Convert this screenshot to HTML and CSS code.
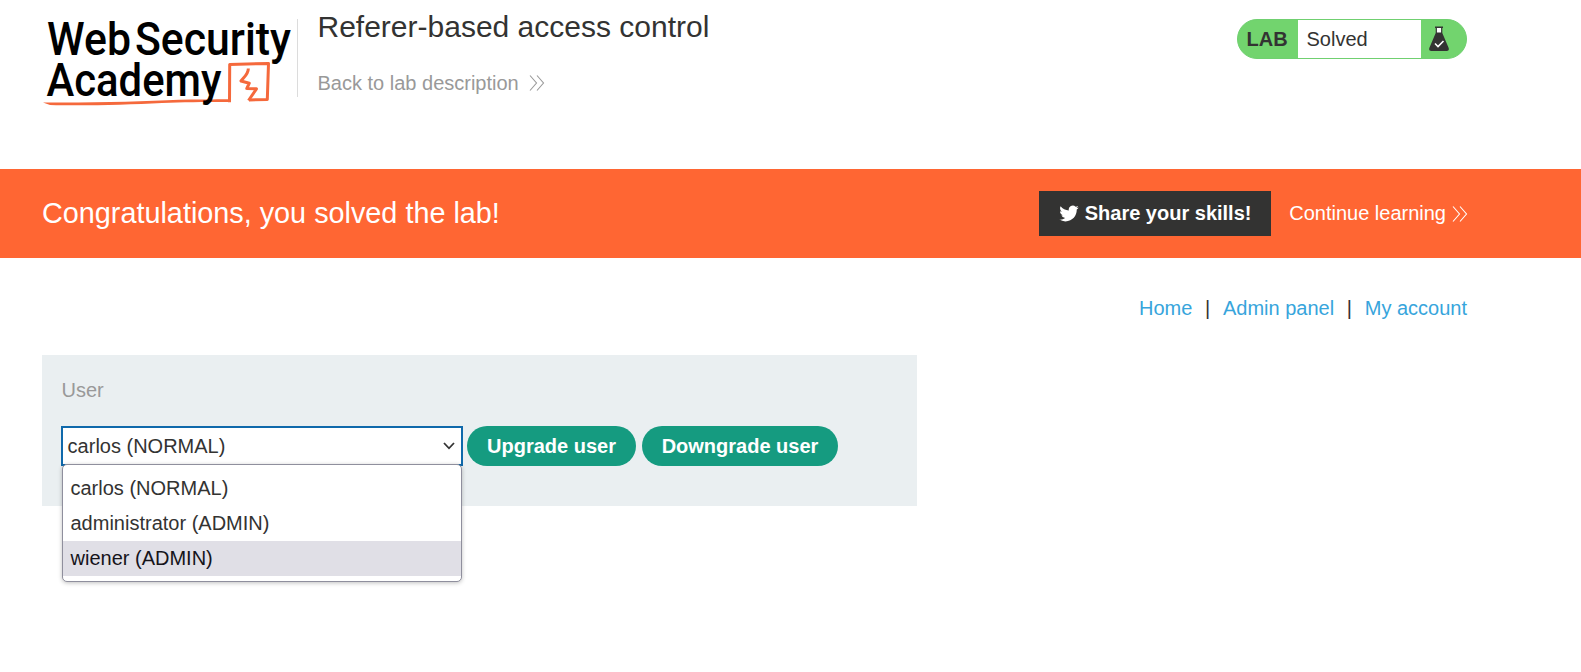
FILE: index.html
```html
<!DOCTYPE html>
<html lang="en">
<head>
<meta charset="utf-8">
<title>Referer-based access control</title>
<link rel="stylesheet" href="styles.css">
</head>
<body>
<header class="header">
  <svg class="logo" width="256" height="98" viewBox="0 0 256 98" role="img" aria-label="Web Security Academy">
    <g class="logo-mark">
      <path class="logo-taper" d="M1 91.500C50 91.500 90 91 125 89.200C150 88 172 88.600 188 88.300V91C160 91 140 91 120 92C85 93.800 40 95 8 94Z"/>
      <path class="logo-line" d="M187.500 91.200L187.700 53.500L226.500 52.500L225.300 88.500L207 89"/>
      <path class="logo-bolt" d="M206.300 57.500C206.500 63 202 66 199 70L207.300 72.200L204.800 77.500L214.500 77.800L206.500 89.500"/>
    </g>
    <g class="logo-text">
      <text x="5" y="43.700" textLength="84" lengthAdjust="spacingAndGlyphs">Web</text>
      <text x="93" y="43.700" textLength="156" lengthAdjust="spacingAndGlyphs">Security</text>
      <text x="4.500" y="84.800" textLength="175" lengthAdjust="spacingAndGlyphs">Academy</text>
    </g>
  </svg>
  <div class="title-block">
    <h1 class="title">Referer-based access control</h1>
    <a class="back-link">Back to lab description
      <svg class="chevrons" width="16" height="18" viewBox="0 0 16 18"><path d="M1 1.500L7.500 9L1 16.500M8 1.500L14.500 9L8 16.500"/></svg>
    </a>
  </div>
  <div class="lab-status">
    <span class="lab-tag">LAB</span>
    <span class="lab-state">Solved</span>
    <span class="lab-icon">
      <svg width="22" height="26" viewBox="0 0 22 26">
        <path class="flask-neck" d="M8.300 1.500H13.700V8H8.300Z"/>
        <path class="flask-body" d="M7 .5H15V2H14.300V7L20.700 22Q21.500 25 18.500 25H3.500Q.5 25 1.300 22L7.700 7V2H7ZM8.900 2V6.500H13.100V2Z" fill-rule="evenodd"/>
        <path class="flask-check" d="M7 17.500L10 20.500L15.500 15"/>
      </svg>
    </span>
  </div>
</header>
<section class="banner">
  <p class="banner-text">Congratulations, you solved the lab!</p>
  <a class="share">
    <svg class="bird" width="20" height="17" viewBox="0 1.500 24 21"><path d="M23.950 4.570a10 10 0 0 1-2.820.77 4.960 4.960 0 0 0 2.160-2.720c-.95.55-2 .95-3.130 1.180a4.920 4.920 0 0 0-8.380 4.480C7.690 8.090 4.070 6.130 1.640 3.160a4.820 4.820 0 0 0-.67 2.480c0 1.710.87 3.210 2.190 4.100a4.900 4.900 0 0 1-2.230-.62v.06a4.920 4.920 0 0 0 3.950 4.830 5 5 0 0 1-2.210.08 4.940 4.940 0 0 0 4.600 3.420A9.870 9.870 0 0 1 0 19.540a14 14 0 0 0 7.550 2.210c9.050 0 14-7.500 14-13.980 0-.21 0-.42-.02-.63a9.940 9.940 0 0 0 2.420-2.570z"/></svg>
    <span class="share-text">Share your skills!</span>
  </a>
  <a class="continue"><span class="share-text">Continue learning</span>
    <svg class="chevrons" width="16" height="18" viewBox="0 0 16 18"><path d="M1 1.500L7.500 9L1 16.500M8 1.500L14.500 9L8 16.500"/></svg>
  </a>
</section>
<main class="content">
  <nav class="nav">
    <a class="nav-link">Home</a><span>|</span><a class="nav-link">Admin panel</a><span>|</span><a class="nav-link">My account</a>
  </nav>
  <form class="panel">
    <label class="label">User</label>
    <div class="controls">
      <div class="select">
        <span>carlos (NORMAL)</span>
        <svg class="caret" width="12" height="8" viewBox="0 0 12 8"><path d="M1 1L6 6.300L11 1"/></svg>
        <div class="menu">
          <div class="option">carlos (NORMAL)</div>
          <div class="option">administrator (ADMIN)</div>
          <div class="option option-active">wiener (ADMIN)</div>
        </div>
      </div>
      <button class="button upgrade" type="button">Upgrade user</button>
      <button class="button downgrade" type="button">Downgrade user</button>
    </div>
  </form>
</main>
</body>
</html>
```
FILE: styles.css
```css
* { box-sizing: border-box; }
body {
  min-height: 672px;
  margin: 0;
  background: #fff;
  color: #333332;
  font: 20px/24px "Liberation Sans", Arial, sans-serif;
}
svg { display: block; flex: none; }
.header {
  display: flex;
  align-items: flex-start;
  height: 169px;
  padding: 0 114px 0 42px;
}
.logo { margin-top: 11px; overflow: visible; }
.logo-text {
  fill: #000;
  font: 500 47px Roboto, sans-serif;
}
.logo-taper { fill: #f5693c; }
.logo-line, .logo-bolt {
  fill: none;
  stroke: #f5693c;
  stroke-width: 3;
  stroke-linejoin: round;
}
.title-block {
  height: 78px;
  margin: 19px 0 0 -1px;
  padding-left: 19.500px;
  border-left: 1px solid #dcdcdc;
}
.title {
  margin: -9px 0 0;
  font-size: 30px;
  font-weight: 400;
  line-height: 34px;
}
.back-link {
  display: flex;
  align-items: center;
  gap: 10.500px;
  margin-top: 27px;
  color: #999;
}
.chevrons path {
  fill: none;
  stroke: currentColor;
  stroke-width: 1.1;
}
.lab-status {
  display: flex;
  width: 230px;
  height: 40px;
  margin: 19px 0 0 auto;
  border: 1px solid #70d070;
  border-radius: 20px;
  overflow: hidden;
  background: #72d46e;
  line-height: 38px;
}
.lab-tag { width: 60px; padding-left: 8.500px; font-weight: 700; }
.lab-state { width: 123px; padding-left: 8.500px; background: #fff; }
.lab-icon { padding: 6px 0 0 7px; }
.flask-neck { fill: #fff; }
.flask-body { fill: #333332; }
.flask-check { fill: none; stroke: #fff; stroke-width: 1.6; }
.banner {
  display: flex;
  align-items: center;
  height: 89px;
  padding: 0 113px 0 42px;
  background: #ff6633;
  color: #fff;
}
.banner-text { margin: 0 auto 0 0; padding-bottom: 2px; font-size: 28.800px; line-height: 34px; }
.share {
  display: flex;
  align-items: center;
  gap: 6px;
  width: 232px;
  height: 45px;
  padding-left: 19.500px;
  background: #333332;
  font-weight: 700;
  white-space: nowrap;
}
.share-text { padding-bottom: 2px; }
.bird { fill: #fff; }
.continue {
  display: flex;
  align-items: center;
  gap: 6px;
  margin-left: 18px;
}
.content { padding: 38px 114px 0 42px; }
.nav { display: flex; justify-content: flex-end; gap: 12.700px; }
.nav-link { color: #37a5dc; }
.panel {
  width: 875px;
  height: 151px;
  margin-top: 35px;
  padding: 23px 19px;
  background: #eaeff1;
}
.label { display: block; margin-left: .5px; color: #999; }
.controls { display: flex; margin-top: 24px; }
.select {
  position: relative;
  display: flex;
  align-items: center;
  justify-content: space-between;
  width: 402px;
  height: 40px;
  padding: 0 6px 0 4.600px;
  border: 2px solid #0f69ab;
  background: #fff;
}
.caret { fill: none; stroke: #333; stroke-width: 1.8; }
.menu {
  position: absolute;
  top: 36px;
  left: -1px;
  width: 400px;
  height: 118px;
  padding-top: 6px;
  border: 1px solid #8f8f9d;
  border-radius: 5px;
  background: #fff;
  box-shadow: 0 1px 4px rgba(0, 0, 0, .25);
}
.option { height: 35px; padding-left: 7.500px; line-height: 35px; }
.option-active { background: #e0dfe6; color: #15141a; }
.button {
  height: 40px;
  padding: 0;
  border: 0;
  border-radius: 20px;
  background: #159b80;
  color: #fff;
  font: 700 20px/40px "Liberation Sans", Arial, sans-serif;
}
.upgrade { width: 169px; margin-left: 4px; }
.downgrade { width: 196px; margin-left: 6px; }
```
